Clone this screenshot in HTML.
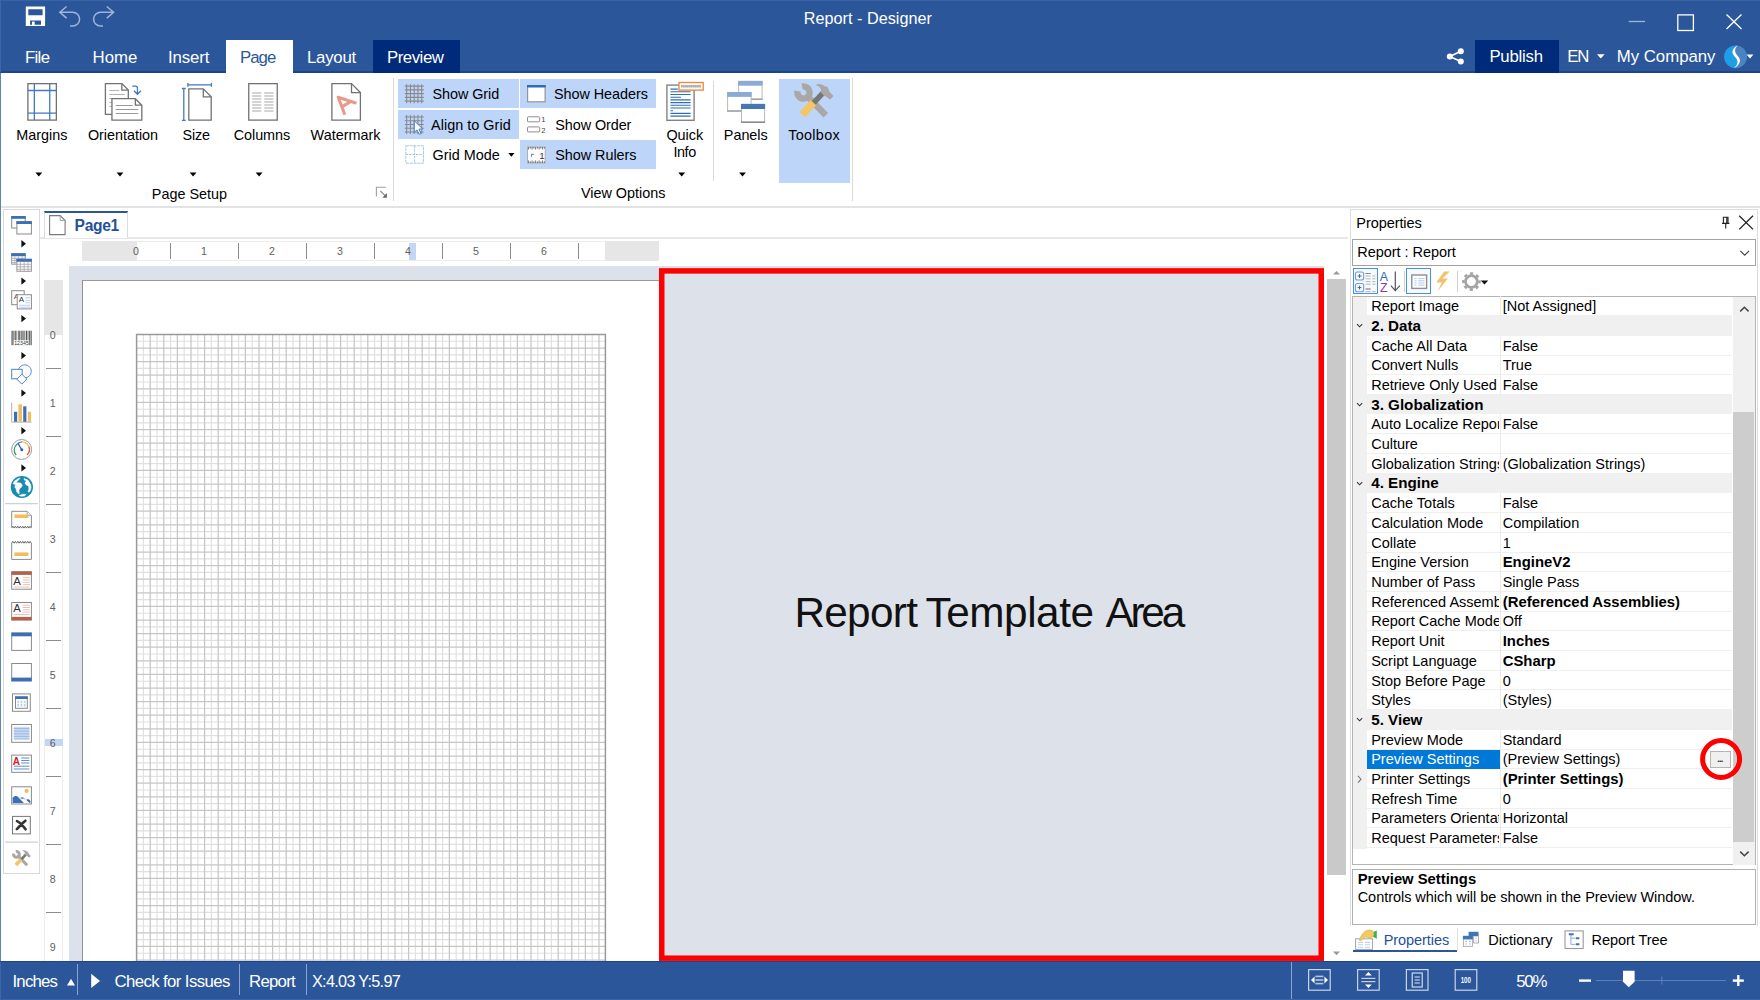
<!DOCTYPE html>
<html><head><meta charset="utf-8"><title>Report - Designer</title>
<style>
html,body{margin:0;padding:0}
body{width:1760px;height:1000px;position:relative;overflow:hidden;background:#fff;font-family:'Liberation Sans',sans-serif;color:#000}
div,svg{position:absolute;box-sizing:border-box}
div{line-height:40px;white-space:pre}
svg{overflow:visible}
svg text{font-family:'Liberation Sans',sans-serif}
</style></head><body>
<!-- p_title -->
<div style="left:0px;top:0px;width:1760px;height:72.6px;background:#2b579a;"></div>
<div style="left:0px;top:71px;width:1760px;height:1.6px;background:#1b4590;"></div>
<div style="left:0px;top:0px;width:1760px;height:1.1px;background:#3a63a5;"></div>
<div style="left:0px;top:0px;width:1.1px;height:72px;background:#3d66a7;"></div>
<svg style="left:20px;top:0px;" width="110" height="40" viewBox="0 0 110 40"><path d="M5.8 6.5h19.3v19.5h-19.3z M8.3 9.2v6.1h14.3v-6.1z M10.1 20.4v4.4h10.9v-4.4z" fill="#fff" fill-rule="evenodd"/><rect x="12" y="21.6" width="2.7" height="3.4" fill="#fff"/><g fill="none" stroke="#9fb4da" stroke-width="1.5"><path d="M46.6 6.5 L39.8 12.3 L46.6 18.1 M39.8 12.3 H52.6 A7 6.85 0 0 1 52.6 26 H50"/><path d="M86.8 6.5 L93.6 12.3 L86.8 18.1 M93.6 12.3 H80.6 A7 6.85 0 0 0 80.6 26 H83"/></g></svg>
<div style="left:803.8px;top:-2px;font-size:16.2px;letter-spacing:0.02px;color:#fff;">Report - Designer</div>
<svg style="left:1620px;top:8px;" width="130" height="28" viewBox="0 0 130 28"><g fill="none" stroke="#fff" stroke-width="1.3"><path d="M8.7 13.5H25" stroke="#9fb4da"/><rect x="57.8" y="6.9" width="15.6" height="15.6"/><path d="M106.5 6.5L121.5 21 M121.5 6.5L106.5 21"/></g></svg>
<div style="left:226.3px;top:40.2px;width:66.4px;height:33px;background:#fff;"></div>
<div style="left:372.6px;top:40.2px;width:87.6px;height:32.4px;background:#002a7a;"></div>
<div style="left:25px;top:38px;font-size:16.8px;letter-spacing:-0.68px;color:#fff;">File</div>
<div style="left:92.5px;top:38px;font-size:16.8px;letter-spacing:0.05px;color:#fff;">Home</div>
<div style="left:168px;top:38px;font-size:16.8px;letter-spacing:-0.1px;color:#fff;">Insert</div>
<div style="left:240px;top:38px;font-size:16.8px;letter-spacing:-0.98px;color:#2b579a;">Page</div>
<div style="left:307px;top:38px;font-size:16.8px;letter-spacing:-0.24px;color:#fff;">Layout</div>
<div style="left:387px;top:38px;font-size:16.8px;letter-spacing:-0.47px;color:#fff;">Preview</div>
<div style="left:1475.3px;top:40.2px;width:84.2px;height:32.4px;background:#002a7a;"></div>
<div style="left:1489.4px;top:37px;font-size:16.8px;letter-spacing:-0.22px;color:#fff;">Publish</div>
<div style="left:1567.3px;top:37px;font-size:16.8px;letter-spacing:-1.2px;color:#fff;">EN</div>
<div style="left:1616.8px;top:37px;font-size:16.8px;letter-spacing:-0.02px;color:#fff;">My Company</div>
<svg style="left:1440px;top:40px;" width="320" height="32" viewBox="0 0 320 32"><g fill="#fff"><circle cx="9.8" cy="16.5" r="3"/><circle cx="20.8" cy="11.2" r="3"/><circle cx="20.8" cy="21.6" r="3"/></g><path d="M20.8 11.2L9.8 16.5L20.8 21.6" fill="none" stroke="#fff" stroke-width="1.6"/><path d="M157 14.2h7.6l-3.8 4.2z" fill="#fff"/><circle cx="295.5" cy="16.8" r="11.4" fill="#1c9fe6"/><path d="M295.5 5.4A11.4 11.4 0 0 1 295.5 28.2C299 24 299.5 20 296 16.5C292.5 13 292.5 9 295.5 5.4z" fill="#4c82c4"/><path d="M297.5 5.6C291 9 291.5 13.5 295 17C298.5 20.5 298.5 24 294 28.1C299.5 25.5 302 20.5 298 16.3C294.5 12.6 294 9.5 297.5 5.6z" fill="#fff"/><path d="M306.6 14.6h6.8l-3.4 3.8z" fill="#fff"/></svg>
<!-- p_ribbon -->
<div style="left:0px;top:72.5px;width:1760px;height:134px;background:#fff;"></div>
<div style="left:0px;top:205.7px;width:1760px;height:2px;background:#e3e3e3;"></div>
<div style="left:398px;top:79.2px;width:121px;height:28.4px;background:#bdd5f9;"></div>
<div style="left:398px;top:109.9px;width:121px;height:28.9px;background:#bdd5f9;"></div>
<div style="left:520.2px;top:79.2px;width:136.2px;height:28.4px;background:#bdd5f9;"></div>
<div style="left:520.2px;top:140.2px;width:136.2px;height:29.2px;background:#bdd5f9;"></div>
<div style="left:779px;top:79.2px;width:71px;height:103.5px;background:#bdd5f9;"></div>
<div style="left:393.2px;top:77.6px;width:1px;height:123.4px;background:#dadada;"></div>
<div style="left:712.7px;top:81.3px;width:1px;height:99.4px;background:#dadada;"></div>
<div style="left:852px;top:77.6px;width:1px;height:123.4px;background:#dadada;"></div>
<div style="left:16.3px;top:115px;font-size:14.4px;">Margins</div>
<div style="left:87.9px;top:115px;font-size:14.4px;letter-spacing:-0.02px;">Orientation</div>
<div style="left:182.5px;top:115px;font-size:14.4px;letter-spacing:-0.17px;">Size</div>
<div style="left:233.8px;top:115px;font-size:14.4px;letter-spacing:-0.07px;">Columns</div>
<div style="left:310.6px;top:115px;font-size:14.4px;letter-spacing:0.01px;">Watermark</div>
<div style="left:151.8px;top:174px;font-size:14.4px;letter-spacing:0px;">Page Setup</div>
<div style="left:580.9px;top:173px;font-size:14.4px;">View Options</div>
<div style="left:432.6px;top:74px;font-size:14.4px;letter-spacing:-0.07px;">Show Grid</div>
<div style="left:431.1px;top:105px;font-size:14.4px;letter-spacing:0.03px;">Align to Grid</div>
<div style="left:432.6px;top:135px;font-size:14.4px;letter-spacing:0.01px;">Grid Mode</div>
<div style="left:553.9px;top:74px;font-size:14.4px;letter-spacing:-0.04px;">Show Headers</div>
<div style="left:555.3px;top:105px;font-size:14.4px;letter-spacing:-0.08px;">Show Order</div>
<div style="left:555.3px;top:135px;font-size:14.4px;letter-spacing:-0.04px;">Show Rulers</div>
<div style="left:666.4px;top:115px;font-size:14.4px;letter-spacing:0.01px;">Quick</div>
<div style="left:673.5px;top:132px;font-size:14.4px;letter-spacing:-0.45px;">Info</div>
<div style="left:723.8px;top:115px;font-size:14.4px;letter-spacing:-0.01px;">Panels</div>
<div style="left:788.2px;top:115px;font-size:14.4px;letter-spacing:0.32px;">Toolbox</div>
<svg style="left:0px;top:72px;" width="1760" height="135" viewBox="0 0 1760 135"><path d="M35.4 100.4h6.8l-3.4 4z" fill="#000"/><path d="M116.6 100.4h6.8l-3.4 4z" fill="#000"/><path d="M189.7 100.4h6.8l-3.4 4z" fill="#000"/><path d="M255.7 100.4h6.8l-3.4 4z" fill="#000"/><path d="M678.3 100.4h6.8l-3.4 4z" fill="#000"/><path d="M739.1 100.4h6.8l-3.4 4z" fill="#000"/><path d="M508.3 80.9h6.2l-3.1 3.8z" fill="#000"/><path d="M376.4 124.6 V115.3 H385.9" fill="none" stroke="#a0a0a0" stroke-width="1.1"/><path d="M380.4 119 L385 123.6" stroke="#8a8a8a" stroke-width="1.1"/><path d="M386.9 121 V125.8 H382.3z" fill="#666"/><g transform="translate(27.25 11)" fill="none"><path d="M7.1 0.7v36.4M22.5 0.7v36.4M0.7 7.5h28.4M0.7 30.2h28.4" stroke="#3f7ac2" stroke-width="1.3"/><rect x="0.65" y="0.65" width="28.45" height="36.45" stroke="#727272" stroke-width="1.3"/></g><g transform="translate(104.75 11)" fill="#fff" stroke="#727272" stroke-width="1.3"><path d="M0.65 0.65h16.5l6.4 6.4v24.4h-22.9z"/><path d="M17.1 0.65v6.4h6.4" fill="none"/><path d="M4.5 7.5h10M4.5 11.5h15.5M4.5 15.5h15.5M4.5 19.5h4M4.5 23.5h4" stroke="#b5b5b5" stroke-width="1"/><path d="M7.2 15.7h23.4l6.5 6.5v14.9h-29.9z"/><path d="M30.6 15.7v6.5h6.5" fill="none"/><path d="M11 22.5h17M11 26.5h22.5M11 30.5h22.5" stroke="#9a9a9a" stroke-width="1"/><path d="M27.5 3.2h3.2a2 2 0 0 1 2 2v5.5M29.2 7.8l3.5 3.5l3.5-3.5" fill="none" stroke="#3f7ac2" stroke-width="1.3"/></g><g transform="translate(181.9 11)" fill="none" stroke-width="1.3"><path d="M6.9 5.9h14.5l7.9 7.9v23.3h-22.4z" stroke="#727272" fill="#fff"/><path d="M21.4 5.9v7.9h7.9" stroke="#727272"/><path d="M6 1.8h23.5M6 0v3.8M29.5 0v3.8M1.9 5.5v31.8M0 5.5h3.8M0 37.3h3.8" stroke="#3f7ac2"/></g><g transform="translate(248.1 11)" fill="none"><rect x="0.65" y="0.65" width="28.5" height="36.45" stroke="#727272" stroke-width="1.3" fill="#fff"/><path d="M4 10h9.2M4 13h9.2M4 16h9.2M4 19h9.2M4 22h9.2M4 25h9.2M4 28h9.2M16.2 10h9.2M16.2 13h9.2M16.2 16h9.2M16.2 19h9.2M16.2 22h9.2M16.2 25h9.2M16.2 28h9.2" stroke="#a8a8a8" stroke-width="1.2"/></g><g transform="translate(331.25 11)" fill="none"><path d="M0.65 0.65h19.6l8.9 8.9v27.55h-28.5z" stroke="#727272" stroke-width="1.3" fill="#fff"/><path d="M20.25 0.65v8.9h8.9" stroke="#727272" stroke-width="1.3"/><path d="M13.6 31.8L6.9 14.2L25.2 20.2M11.4 23.4L18.6 19.2" stroke="#e8998d" stroke-width="3.1" stroke-linejoin="round"/></g><path d="M406.7 12.2v19M404.8 14.1h19M410.45 12.2v19M404.8 17.85h19M414.2 12.2v19M404.8 21.6h19M417.95 12.2v19M404.8 25.35h19M421.7 12.2v19M404.8 29.1h19" stroke="#8a8a8a" stroke-width="1.05" fill="none"/><path d="M406.7 43v19M404.8 44.9h19M410.45 43v19M404.8 48.65h19M414.2 43v19M404.8 52.4h19M417.95 43v19M404.8 56.15h19M421.7 43v19M404.8 59.9h19" stroke="#8a8a8a" stroke-width="1.05" fill="none"/><path d="M414.3 48.8 v11.6 l2.7-2.5 l2 4.4 l1.9-0.9 l-2-4.3 l3.7-0.2z" fill="#fff" stroke="#3b78c3" stroke-width="0.9" stroke-linejoin="round"/><g transform="translate(405.3 73.3)" fill="none" stroke="#a6c4ea" stroke-width="1"><rect x="0.5" y="0.5" width="17.6" height="17.4" stroke-dasharray="3 0.8"/><path d="M9.3 0.5v17.4M0.5 9.2h17.6" stroke-dasharray="2.4 1"/></g><g transform="translate(527 13)"><rect x="0.6" y="0.6" width="17.5" height="16.2" fill="#fff" stroke="#959595" stroke-width="1.2"/><rect x="0" y="0" width="18.7" height="2.5" fill="#2e6db5"/></g><g transform="translate(527 44.3)" fill="#fff" stroke="#8f8f8f" stroke-width="1"><rect x="0.5" y="0.5" width="12.2" height="5" rx="0.8"/><rect x="0.5" y="10.6" width="12.2" height="5" rx="0.8"/></g><text x="541.2" y="50.1" font-size="7.7" fill="#444">1</text><text x="541.2" y="60.5" font-size="7.7" fill="#444">2</text><g transform="translate(527 74.5)"><rect x="0.5" y="0.5" width="17.7" height="16" fill="#fff" stroke="#b0b0b0" stroke-width="1"/><path d="M1.6 0.5v2.6M3.35 0.5v1.6M5.1 0.5v2.6M6.85 0.5v1.6M8.6 0.5v2.6M10.35 0.5v1.6M12.1 0.5v2.6M13.85 0.5v1.6M15.6 0.5v2.6M17.35 0.5v1.6M1.6 16.5v-2.6M3.35 16.5v-1.6M5.1 16.5v-2.6M6.85 16.5v-1.6M8.6 16.5v-2.6M10.35 16.5v-1.6M12.1 16.5v-2.6M13.85 16.5v-1.6M15.6 16.5v-2.6M17.35 16.5v-1.6" stroke="#555" stroke-width="0.8" fill="none"/><path d="M4.4 7.8h2.4M4.4 7.8v2.4" stroke="#3b78c3" stroke-width="1" fill="none"/><text x="12.2" y="12" font-size="9.7" fill="#333">1</text></g><rect x="666.9" y="13.1" width="27.2" height="35.2" fill="#fff" stroke="#838383" stroke-width="1.4"/><path d="M670.4 17.1h7.4M670.4 19.8h20.2M670.4 22.5h20.2M670.4 25.2h10.5M670.4 27.9h20.2M670.4 30.6h20.2M670.4 33.3h20.2M670.4 36h20.2M670.4 38.7h2.6M670.4 41.4h20.2M670.4 44.1h20.2" stroke="#2f6db8" stroke-width="1.1" fill="none"/><rect x="679" y="10.5" width="24.2" height="7.6" fill="#fff" stroke="#f0883a" stroke-width="1.35"/><path d="M681.4 14.3h19.6" stroke="#777" stroke-width="2.6" stroke-dasharray="1.1 0.9"/><rect x="738.6" y="9.4" width="23.5" height="17.9" fill="#fff" stroke="#b9b9b9" stroke-width="1"/><rect x="738.1" y="26.5" width="24.5" height="1.3" fill="#9a9a9a"/><rect x="738.1" y="8.9" width="24.5" height="4.8" fill="#8aabd4"/><rect x="727.6" y="20.5" width="23.5" height="18.6" fill="#fff" stroke="#b9b9b9" stroke-width="1"/><rect x="727.1" y="38.3" width="24.5" height="1.3" fill="#9a9a9a"/><rect x="727.1" y="20" width="24.5" height="4.9" fill="#8aabd4"/><rect x="741.5" y="32.4" width="23.1" height="17.9" fill="#fff" stroke="#b9b9b9" stroke-width="1"/><rect x="741" y="49.5" width="24.1" height="1.3" fill="#7d7d7d"/><rect x="741" y="31.9" width="24.1" height="5.1" fill="#4477b5"/><g transform="translate(794.2 11.3) scale(1) translate(-14.2 -7.3)"><path d="M22.1 10.6A6.05 6.05 0 1 1 17.6 15.1" fill="none" stroke="#a9a8a6" stroke-width="6.3"/><path d="M27.3 20.3L45.8 39.3" stroke="#a9a8a6" stroke-width="6.4"/><path d="M42.8 17.2L33.2 27.4" stroke="#767676" stroke-width="5.4"/><path d="M33.4 26.6L22.2 38.8" stroke="#f5c666" stroke-width="7.6"/><path d="M35.5 8.9C38.5 7.4 42 8 44.8 10.2L47.6 11L49.4 15.6L53.5 20L50 23.7L46.2 20.4L43.6 19.6L40.9 16.2L41 13.2C39.8 11 38 9.6 35.5 8.9z" fill="#a9a8a6"/></g></svg>
<!-- p_tool -->
<div style="left:3.3px;top:209.3px;width:36.9px;height:665px;background:#fff;border:1px solid #d9d9d9;"></div>
<svg style="left:0px;top:205px;" width="44" height="680" viewBox="0 0 44 680"><path d="M21.4 35v7.4l4.6-3.7z" fill="#111"/><path d="M21.4 72.4v7.4l4.6-3.7z" fill="#111"/><path d="M21.4 109.9v7.4l4.6-3.7z" fill="#111"/><path d="M21.4 146.9v7.4l4.6-3.7z" fill="#111"/><path d="M21.4 184.4v7.4l4.6-3.7z" fill="#111"/><path d="M21.4 222v7.4l4.6-3.7z" fill="#111"/><path d="M21.4 259.2v7.4l4.6-3.7z" fill="#111"/><g transform="translate(11.2 11)"><rect x="0.5" y="0.5" width="13.5" height="11.5" fill="#fff" stroke="#8a8a8a" stroke-width="1"/><rect x="0" y="0" width="14.5" height="2.8" fill="#3b6fb6"/><rect x="5.7" y="5.7" width="14.5" height="12.3" fill="#fff" stroke="#8a8a8a" stroke-width="1"/><rect x="5.2" y="5.2" width="15.5" height="2.8" fill="#3b6fb6"/></g><g transform="translate(11.2 48.2)"><rect x="0.5" y="0.5" width="13.5" height="10.5" fill="#fff" stroke="#9a9a9a" stroke-width="1"/><rect x="0" y="0" width="14.5" height="3" fill="#3b6fb6"/><path d="M3.62 3v8.5M7.25 3v8.5M10.88 3v8.5M0 5.12h14.5M0 7.25h14.5M0 9.38h14.5" stroke="#a5a5a5" stroke-width="0.8" fill="none"/><rect x="5.7" y="6.1" width="14.5" height="12" fill="#fff" stroke="#9a9a9a" stroke-width="1"/><rect x="5.2" y="5.6" width="15.5" height="3" fill="#3b6fb6"/><path d="M9.07 8.6v10M12.95 8.6v10M16.82 8.6v10M5.2 11.1h15.5M5.2 13.6h15.5M5.2 16.1h15.5" stroke="#a5a5a5" stroke-width="0.8" fill="none"/></g><g transform="translate(11.2 85.2)"><rect x="0.5" y="0.5" width="12.5" height="14" fill="#fff" stroke="#8a8a8a" stroke-width="1"/><text x="2.6" y="8.5" font-size="8" fill="#555">A</text><rect x="6" y="4.5" width="14.2" height="14.2" fill="#fff" stroke="#8a8a8a" stroke-width="1"/><text x="7.6" y="12.3" font-size="8" fill="#333">A</text><path d="M14 7.5h5M14 10h5M14 12.5h5M8 15h11M8 17h11" stroke="#b9cfee" stroke-width="1.1"/></g><g transform="translate(11.2 125.7)"><rect x="0.3" y="0" width="1.2" height="14.5" fill="#555"/><rect x="2.2" y="0" width="0.7" height="14.5" fill="#555"/><rect x="3.4" y="0" width="1.2" height="14.5" fill="#555"/><rect x="5.3" y="0" width="0.7" height="14.5" fill="#555"/><rect x="6.8" y="0" width="0.7" height="14.5" fill="#555"/><rect x="8" y="0" width="1.2" height="14.5" fill="#555"/><rect x="10" y="0" width="0.7" height="14.5" fill="#555"/><rect x="11.2" y="0" width="1.2" height="14.5" fill="#555"/><rect x="13.2" y="0" width="0.7" height="14.5" fill="#555"/><rect x="14.6" y="0" width="1.2" height="14.5" fill="#555"/><rect x="16.4" y="0" width="0.7" height="14.5" fill="#555"/><rect x="17.6" y="0" width="1.1" height="14.5" fill="#555"/><rect x="19.3" y="0" width="1.2" height="14.5" fill="#555"/><rect x="2.6" y="9.6" width="15.4" height="5" fill="#fff"/><text x="3" y="14.3" font-size="5" fill="#333" textLength="14.6" lengthAdjust="spacingAndGlyphs">12345</text></g><g transform="translate(11.2 159.3)"><circle cx="13.6" cy="7" r="6.5" fill="#fff" stroke="#5a8fd0" stroke-width="1"/><rect x="0.5" y="5" width="10.5" height="9.5" fill="#fff" stroke="#4a84c8" stroke-width="1"/><path d="M10.6 9.8l5 5l-5 5l-5-5z" fill="#fff" stroke="#4a84c8" stroke-width="1"/></g><g transform="translate(11.2 197.5)"><path d="M0.5 0v19.6h20" fill="none" stroke="#b0b0b0" stroke-width="1"/><rect x="2.8" y="9.3" width="3.2" height="10" fill="#3b6fb6"/><rect x="7.2" y="1.8" width="3.6" height="17.5" fill="#f2bd5c"/><rect x="12" y="3.8" width="3.2" height="15.5" fill="#3b6fb6"/><rect x="16.6" y="9.3" width="3.2" height="10" fill="#f2bd5c"/></g><g transform="translate(11.2 234)"><circle cx="10.4" cy="10.5" r="10" fill="#fff" stroke="#9a9a9a" stroke-width="1"/><path d="M4.9 16A7.6 7.6 0 0 1 6 5" fill="none" stroke="#3f9a6a" stroke-width="1.3"/><path d="M6 5A7.6 7.6 0 0 1 10.8 2.9" fill="none" stroke="#4a84c8" stroke-width="1.3"/><path d="M10.8 2.9A7.6 7.6 0 0 1 17.6 7.6" fill="none" stroke="#f2bd5c" stroke-width="1.3"/><path d="M17.6 7.6A7.6 7.6 0 0 1 15.9 16" fill="none" stroke="#e2553a" stroke-width="1.3"/><path d="M6.8 4.4l3.6 6.1" stroke="#2f62aa" stroke-width="1.3"/><circle cx="10.6" cy="10.8" r="1.5" fill="#2f62aa"/></g><g transform="translate(4 267)"><circle cx="17.87" cy="15" r="11.1" fill="#178bb0"/><g fill="#fff" stroke="#fff" stroke-width="0.5" stroke-linejoin="round"><path d="M9 11.7L10.5 9L14.4 6.5L16.2 6.2L12 10.5L16.8 11.1L18.3 13.2L17.7 15L15.9 16.2L15 18.6L15.3 21.6L14.1 21.6L12.6 19.5L12 16.8L10.8 15.3L11.4 12.6z"/><path d="M20.1 6.5L24 8.1L26.4 12L27.2 15L26.4 18.6L25.2 20.1L24 20L24.9 16.8L24.6 14.1L22.2 12.9L20.9 11.1L22.2 9L20.1 7.8z"/><path d="M15 23.4L18.6 22.2L22.2 22.4L20.4 24L17.4 24.3z"/></g></g><path d="M5 298.7h33.1" stroke="#d0d0d0" stroke-width="1.3"/><g transform="translate(11.2 305.8)"><path d="M0.5 16.5V0.5h15.4l4.3 4.3V16.5" fill="#fff" stroke="#8a8a8a" stroke-width="1"/><path d="M15.9 0.5v4.3h4.3" fill="#dfe8f6" stroke="#9a9a9a" stroke-width="0.8"/><path d="M0.5 17.3l1.23 -1.9l1.23 1.9l1.23 -1.9l1.23 1.9l1.23 -1.9l1.23 1.9l1.23 -1.9l1.23 1.9l1.23 -1.9l1.23 1.9l1.23 -1.9l1.23 1.9l1.23 -1.9l1.23 1.9l1.23 -1.9l1.23 1.9" fill="none" stroke="#6a6a6a" stroke-width="1"/><rect x="3.2" y="3.6" width="14" height="3.6" fill="#f2bd5c"/></g><g transform="translate(11.2 336.6)"><path d="M0.5 1.5V17.8h19.7V1.5" fill="#fff" stroke="#8a8a8a" stroke-width="1"/><path d="M0.5 1.6l1.23 -1.9l1.23 1.9l1.23 -1.9l1.23 1.9l1.23 -1.9l1.23 1.9l1.23 -1.9l1.23 1.9l1.23 -1.9l1.23 1.9l1.23 -1.9l1.23 1.9l1.23 -1.9l1.23 1.9l1.23 -1.9l1.23 1.9" fill="none" stroke="#6a6a6a" stroke-width="1"/><rect x="3.2" y="10.8" width="14" height="3.6" fill="#f2bd5c"/></g><g transform="translate(11.2 366.2)"><rect x="0.5" y="0.5" width="19.7" height="17.5" fill="#fff" stroke="#8a8a8a" stroke-width="1"/><rect x="0.3" y="0.3" width="20.1" height="3.4" fill="#b5604a"/><text x="2" y="13.4" font-size="11.4" fill="#333">A</text><path d="M11.6 6.5h7M11.6 8.8h7M11.6 11.1h7M11.6 13.4h7" stroke="#e6b8ad" stroke-width="0.9"/><path d="M2.6 15.8h15.8" stroke="#e6b8ad" stroke-width="0.9"/></g><g transform="translate(11.2 397)"><rect x="0.5" y="0.5" width="19.7" height="17.5" fill="#fff" stroke="#8a8a8a" stroke-width="1"/><rect x="0.3" y="14.9" width="20.1" height="3.4" fill="#b5604a"/><text x="2" y="10.1" font-size="11.4" fill="#333">A</text><path d="M11.6 3.2h7M11.6 5.5h7M11.6 7.8h7M11.6 10.1h7" stroke="#e6b8ad" stroke-width="0.9"/><path d="M2.6 12.6h15.8" stroke="#e6b8ad" stroke-width="0.9"/></g><g transform="translate(11.2 427.4)"><rect x="0.5" y="0.5" width="19.7" height="17.5" fill="#fff" stroke="#8a8a8a" stroke-width="1"/><rect x="0.3" y="0.3" width="20.1" height="3.6" fill="#3b6fb6"/></g><g transform="translate(11.2 458)"><rect x="0.5" y="0.5" width="19.7" height="17.5" fill="#fff" stroke="#8a8a8a" stroke-width="1"/><rect x="0.3" y="14.6" width="20.1" height="3.6" fill="#3b6fb6"/></g><g transform="translate(12 488.4)"><rect x="0.5" y="0.5" width="17.8" height="17.4" fill="#fff" stroke="#8a8a8a" stroke-width="1"/><rect x="3.5" y="3.5" width="11.8" height="11.4" fill="#fff" stroke="#8a8a8a" stroke-width="1"/><rect x="3" y="3" width="12.8" height="2.6" fill="#3b6fb6"/><path d="M6.2 7.4v6M9.4 7.4v6M12.6 7.4v6" stroke="#b9cfee" stroke-width="1.6" stroke-dasharray="2.4 0.8"/></g><g transform="translate(11.2 519)"><rect x="0.5" y="0.5" width="19.7" height="17.8" fill="#fff" stroke="#8a8a8a" stroke-width="1"/><rect x="2.6" y="2.8" width="15.6" height="12.6" fill="#c9daf2"/><path d="M2.6 4.6h15.6M2.6 7.2h15.6M2.6 9.8h15.6M2.6 12.4h15.6M2.6 15h15.6" stroke="#8fb0dc" stroke-width="0.8"/></g><g transform="translate(11.2 549.6)"><rect x="0.5" y="0.5" width="19.7" height="17.2" fill="#fff" stroke="#8a8a8a" stroke-width="1"/><text x="1.6" y="10.6" font-size="10" font-weight="bold" fill="#d8202a">A</text><path d="M10 3.4h8.2M10 5.9h8.2M10 8.4h8.2M2.6 11.6h15.6M2.6 14.4h15.6" stroke="#5b8fd0" stroke-width="1"/></g><g transform="translate(11.2 581.3)"><rect x="0.5" y="0.5" width="19.7" height="17.2" fill="#fff" stroke="#8a8a8a" stroke-width="1"/><circle cx="15.4" cy="4.6" r="2.1" fill="#f2bd5c"/><path d="M1.4 16.8V11.6C3 9.4 5.4 9 7.4 10.8L13 16.8z" fill="#3b6fb6"/><path d="M8.6 12C10.4 10.6 12.2 10.8 13.6 12.2L17.8 16.4L19.2 16.8V14.6C18.2 13 16.8 12.6 15.4 13.4" fill="#3b6fb6"/><path d="M7 10.4l6.4 6.4M11.6 11l5.6 5.6" stroke="#fff" stroke-width="0.9"/></g><g transform="translate(12 610.9)"><rect x="0.5" y="0.5" width="17.8" height="17.5" fill="#fff" stroke="#777" stroke-width="1"/><path d="M5 5.2C8 6.6 10.6 9.4 13.6 13.4M13.4 4.8C10.6 7 7.4 10.6 4.8 13.2" stroke="#333" stroke-width="2.6" fill="none" stroke-linecap="round"/></g><path d="M5 637.1h33.1" stroke="#d0d0d0" stroke-width="1.3"/><g transform="translate(12 644.9) scale(0.48) translate(-14.2 -7.3)"><path d="M22.1 10.6A6.05 6.05 0 1 1 17.6 15.1" fill="none" stroke="#a9a8a6" stroke-width="6.3"/><path d="M27.3 20.3L45.8 39.3" stroke="#a9a8a6" stroke-width="6.4"/><path d="M42.8 17.2L33.2 27.4" stroke="#767676" stroke-width="5.4"/><path d="M33.4 26.6L22.2 38.8" stroke="#f5c666" stroke-width="7.6"/><path d="M35.5 8.9C38.5 7.4 42 8 44.8 10.2L47.6 11L49.4 15.6L53.5 20L50 23.7L46.2 20.4L43.6 19.6L40.9 16.2L41 13.2C39.8 11 38 9.6 35.5 8.9z" fill="#a9a8a6"/></g></svg>
<!-- p_design -->
<div style="left:0px;top:72.5px;width:1.1px;height:888.5px;background:#6082ba;"></div>
<div style="left:40px;top:237.3px;width:1308px;height:1.8px;background:#e7e7e7;"></div>
<div style="left:43.5px;top:211px;width:84px;height:27px;background:#fff;border-left:1px solid #dcdcdc;border-right:1px solid #dcdcdc;border-top:2.2px solid #2b579a;"></div>
<svg style="left:48.6px;top:214.7px;" width="17" height="21" viewBox="0 0 17 21"><path d="M0.6 0.6h10.6l4.9 4.9v14.1h-15.5z" fill="#fff" stroke="#7a7a7a" stroke-width="1.1"/><path d="M11.2 0.6v4.9h4.9" fill="none" stroke="#9a9a9a" stroke-width="0.9"/></svg>
<div style="left:74.6px;top:206px;font-size:15.6px;letter-spacing:-0.31px;font-weight:bold;color:#24509a;">Page1</div>
<div style="left:82px;top:241.4px;width:577px;height:19.2px;background:#fff;border-top:1px solid #ededed;border-bottom:1px solid #ededed;"></div>
<div style="left:82px;top:241.4px;width:54.7px;height:19.2px;background:#e6e6e6;"></div>
<div style="left:605px;top:241.4px;width:54px;height:19.2px;background:#e6e6e6;"></div>
<div style="left:408.6px;top:243.2px;width:7px;height:17px;background:#c3d6f6;"></div>
<div style="left:133.06px;top:231px;font-size:10.6px;color:#606060;">0</div>
<div style="left:170.3px;top:243.4px;width:1.1px;height:15.3px;background:#8c8c8c;"></div>
<div style="left:201.06px;top:231px;font-size:10.6px;color:#606060;">1</div>
<div style="left:238.3px;top:243.4px;width:1.1px;height:15.3px;background:#8c8c8c;"></div>
<div style="left:269.06px;top:231px;font-size:10.6px;color:#606060;">2</div>
<div style="left:306.3px;top:243.4px;width:1.1px;height:15.3px;background:#8c8c8c;"></div>
<div style="left:337.06px;top:231px;font-size:10.6px;color:#606060;">3</div>
<div style="left:374.3px;top:243.4px;width:1.1px;height:15.3px;background:#8c8c8c;"></div>
<div style="left:405.06px;top:231px;font-size:10.6px;color:#606060;">4</div>
<div style="left:442.3px;top:243.4px;width:1.1px;height:15.3px;background:#8c8c8c;"></div>
<div style="left:473.06px;top:231px;font-size:10.6px;color:#606060;">5</div>
<div style="left:510.3px;top:243.4px;width:1.1px;height:15.3px;background:#8c8c8c;"></div>
<div style="left:541.06px;top:231px;font-size:10.6px;color:#606060;">6</div>
<div style="left:578.3px;top:243.4px;width:1.1px;height:15.3px;background:#8c8c8c;"></div>
<div style="left:44px;top:280px;width:19.4px;height:681px;background:#fff;border-left:1px solid #ededed;border-right:1px solid #ededed;"></div>
<div style="left:44px;top:280px;width:19.4px;height:54.5px;background:#e6e6e6;"></div>
<div style="left:44.8px;top:739.2px;width:17.8px;height:6.8px;background:#c3d6f6;"></div>
<div style="left:49.66px;top:315px;font-size:10.6px;color:#606060;">0</div>
<div style="left:45.6px;top:367.8px;width:15.4px;height:1.1px;background:#8c8c8c;"></div>
<div style="left:49.66px;top:383px;font-size:10.6px;color:#606060;">1</div>
<div style="left:45.6px;top:435.8px;width:15.4px;height:1.1px;background:#8c8c8c;"></div>
<div style="left:49.66px;top:451px;font-size:10.6px;color:#606060;">2</div>
<div style="left:45.6px;top:503.8px;width:15.4px;height:1.1px;background:#8c8c8c;"></div>
<div style="left:49.66px;top:519px;font-size:10.6px;color:#606060;">3</div>
<div style="left:45.6px;top:571.8px;width:15.4px;height:1.1px;background:#8c8c8c;"></div>
<div style="left:49.66px;top:587px;font-size:10.6px;color:#606060;">4</div>
<div style="left:45.6px;top:639.8px;width:15.4px;height:1.1px;background:#8c8c8c;"></div>
<div style="left:49.66px;top:655px;font-size:10.6px;color:#606060;">5</div>
<div style="left:45.6px;top:707.8px;width:15.4px;height:1.1px;background:#8c8c8c;"></div>
<div style="left:49.66px;top:723px;font-size:10.6px;color:#606060;">6</div>
<div style="left:45.6px;top:775.8px;width:15.4px;height:1.1px;background:#8c8c8c;"></div>
<div style="left:49.66px;top:791px;font-size:10.6px;color:#606060;">7</div>
<div style="left:45.6px;top:843.8px;width:15.4px;height:1.1px;background:#8c8c8c;"></div>
<div style="left:49.66px;top:859px;font-size:10.6px;color:#606060;">8</div>
<div style="left:45.6px;top:911.8px;width:15.4px;height:1.1px;background:#8c8c8c;"></div>
<div style="left:49.66px;top:927px;font-size:10.6px;color:#606060;">9</div>
<div style="left:45.6px;top:979.8px;width:15.4px;height:1.1px;background:#8c8c8c;"></div>
<div style="left:68.7px;top:266.4px;width:1255.3px;height:694.6px;background:#dde2ea;"></div>
<div style="left:82.3px;top:279.6px;width:1200px;height:682px;background:#fff;border-left:1.2px solid #8f8f8f;border-top:1.6px solid #9a9a9a;"></div>
<svg style="left:0px;top:0px;" width="700" height="970" viewBox="0 0 700 970"><path d="M143.4 334.4V966M157 334.4V966M170.6 334.4V966M184.2 334.4V966M197.8 334.4V966M211.4 334.4V966M225 334.4V966M238.6 334.4V966M252.2 334.4V966M265.8 334.4V966M279.4 334.4V966M293 334.4V966M306.6 334.4V966M320.2 334.4V966M333.8 334.4V966M347.4 334.4V966M361 334.4V966M374.6 334.4V966M388.2 334.4V966M401.8 334.4V966M415.4 334.4V966M429 334.4V966M442.6 334.4V966M456.2 334.4V966M469.8 334.4V966M483.4 334.4V966M497 334.4V966M510.6 334.4V966M524.2 334.4V966M537.8 334.4V966M551.4 334.4V966M565 334.4V966M578.6 334.4V966M592.2 334.4V966M136.6 341.2H605.4M136.6 354.8H605.4M136.6 368.4H605.4M136.6 382H605.4M136.6 395.6H605.4M136.6 409.2H605.4M136.6 422.8H605.4M136.6 436.4H605.4M136.6 450H605.4M136.6 463.6H605.4M136.6 477.2H605.4M136.6 490.8H605.4M136.6 504.4H605.4M136.6 518H605.4M136.6 531.6H605.4M136.6 545.2H605.4M136.6 558.8H605.4M136.6 572.4H605.4M136.6 586H605.4M136.6 599.6H605.4M136.6 613.2H605.4M136.6 626.8H605.4M136.6 640.4H605.4M136.6 654H605.4M136.6 667.6H605.4M136.6 681.2H605.4M136.6 694.8H605.4M136.6 708.4H605.4M136.6 722H605.4M136.6 735.6H605.4M136.6 749.2H605.4M136.6 762.8H605.4M136.6 776.4H605.4M136.6 790H605.4M136.6 803.6H605.4M136.6 817.2H605.4M136.6 830.8H605.4M136.6 844.4H605.4M136.6 858H605.4M136.6 871.6H605.4M136.6 885.2H605.4M136.6 898.8H605.4M136.6 912.4H605.4M136.6 926H605.4M136.6 939.6H605.4M136.6 953.2H605.4" stroke="#e0e0e0" stroke-width="1.15" fill="none"/><path d="M150.2 334.4V966M163.8 334.4V966M177.4 334.4V966M191 334.4V966M204.6 334.4V966M218.2 334.4V966M231.8 334.4V966M245.4 334.4V966M259 334.4V966M272.6 334.4V966M286.2 334.4V966M299.8 334.4V966M313.4 334.4V966M327 334.4V966M340.6 334.4V966M354.2 334.4V966M367.8 334.4V966M381.4 334.4V966M395 334.4V966M408.6 334.4V966M422.2 334.4V966M435.8 334.4V966M449.4 334.4V966M463 334.4V966M476.6 334.4V966M490.2 334.4V966M503.8 334.4V966M517.4 334.4V966M531 334.4V966M544.6 334.4V966M558.2 334.4V966M571.8 334.4V966M585.4 334.4V966M599 334.4V966M136.6 348H605.4M136.6 361.6H605.4M136.6 375.2H605.4M136.6 388.8H605.4M136.6 402.4H605.4M136.6 416H605.4M136.6 429.6H605.4M136.6 443.2H605.4M136.6 456.8H605.4M136.6 470.4H605.4M136.6 484H605.4M136.6 497.6H605.4M136.6 511.2H605.4M136.6 524.8H605.4M136.6 538.4H605.4M136.6 552H605.4M136.6 565.6H605.4M136.6 579.2H605.4M136.6 592.8H605.4M136.6 606.4H605.4M136.6 620H605.4M136.6 633.6H605.4M136.6 647.2H605.4M136.6 660.8H605.4M136.6 674.4H605.4M136.6 688H605.4M136.6 701.6H605.4M136.6 715.2H605.4M136.6 728.8H605.4M136.6 742.4H605.4M136.6 756H605.4M136.6 769.6H605.4M136.6 783.2H605.4M136.6 796.8H605.4M136.6 810.4H605.4M136.6 824H605.4M136.6 837.6H605.4M136.6 851.2H605.4M136.6 864.8H605.4M136.6 878.4H605.4M136.6 892H605.4M136.6 905.6H605.4M136.6 919.2H605.4M136.6 932.8H605.4M136.6 946.4H605.4M136.6 960H605.4" stroke="#c6c6c6" stroke-width="1.25" fill="none"/><path d="M136.6 966V334.4H605.4V966" stroke="#999" stroke-width="1.5" fill="none"/></svg>
<div style="left:1327px;top:279.3px;width:18.8px;height:596px;background:#c9c9c9;"></div>
<svg style="left:1327px;top:266px;" width="19" height="695" viewBox="0 0 19 695"><path d="M6 8.6h7l-3.5-3.6z M6 685.6h7l-3.5 3.6z" fill="#9a9a9a"/></svg>
<svg style="left:650px;top:260px;" width="690" height="710" viewBox="0 0 690 710"><rect x="11.75" y="10.9" width="659.5" height="687.3" fill="#dde2ea" stroke="#ff0000" stroke-width="5.5"/></svg>
<div style="left:794.4px;top:593px;font-size:42.3px;color:#111;"><span style="letter-spacing:-0.67px;word-spacing:-2.95px">Report </span><span style="letter-spacing:-0.44px;word-spacing:0.65px">Template </span><span style="letter-spacing:-3.24px">Area</span></div>
<!-- p_props -->
<div style="left:1350px;top:209.3px;width:407.5px;height:717px;background:#fff;border:1px solid #dcdcdc;border-bottom:none;"></div>
<div style="left:1356.3px;top:203px;font-size:14.5px;letter-spacing:-0.07px;">Properties</div>
<svg style="left:1715px;top:212px;" width="42" height="20" viewBox="0 0 42 20"><path d="M8.4 5.2h4.6v6h-4.6z M7 11.4h7.4 M10.7 11.4v5" fill="none" stroke="#222" stroke-width="1.1"/><path d="M11.9 5.2v6" stroke="#222" stroke-width="1.4"/><path d="M24.2 3.8L38 17.4M38 3.8L24.2 17.4" stroke="#222" stroke-width="1.3"/></svg>
<div style="left:1352px;top:238.6px;width:404px;height:27.6px;background:#fff;border:1px solid #a2a2a2;"></div>
<div style="left:1357.3px;top:232px;font-size:14.5px;letter-spacing:-0.05px;">Report : Report</div>
<svg style="left:1738px;top:248px;" width="14" height="10" viewBox="0 0 14 10"><path d="M2.3 2.8l4.4 4.4l4.4-4.4" fill="none" stroke="#444" stroke-width="1.1"/></svg>
<div style="left:1353.1px;top:268.1px;width:24.7px;height:25.9px;background:#f6faff;border:1.1px solid #4a90e2;"></div>
<div style="left:1406.2px;top:268.1px;width:24.5px;height:25.9px;background:#f6faff;border:1.1px solid #4a90e2;"></div>
<div style="left:1403.8px;top:271px;width:1px;height:20.5px;background:#d0d0d0;"></div>
<div style="left:1457px;top:271px;width:1px;height:20.5px;background:#d0d0d0;"></div>
<svg style="left:1353px;top:266.5px;" width="140" height="30" viewBox="0 0 140 30"><g fill="#f3f8fe" stroke="#6f9fd8" stroke-width="1.1"><rect x="2.4" y="5" width="8.3" height="8" rx="2"/><rect x="2.4" y="16.5" width="8.3" height="8.2" rx="2"/><path d="M4.6 9h3.9M6.55 7.1v3.8M4.6 20.6h3.9M6.55 18.7v3.8" stroke="#555" stroke-width="0.9"/></g><path d="M12.6 6.5h5M12.6 9h5M12.6 11.8h5M12.6 14.6h5M12.6 17.2h5M12.6 22h5M12.6 24.6h5M19.3 9h3.2M19.3 11.8h3.2M19.3 14.6h3.2M19.3 17.2h3.2M19.3 24.6h3.2" stroke="#b5b5b5" stroke-width="1" fill="none"/><path d="M12.6 6.5h5M12.6 22h5" stroke="#8a8a8a" stroke-width="1.1" fill="none"/><text x="26.8" y="13.8" font-size="12.4" fill="#2e6db5">A</text><text x="27" y="24.9" font-size="12.4" fill="#8a3bb0">Z</text><path d="M42.3 4.5v19M37.9 18.6l4.4 5l4.6-5" fill="none" stroke="#555" stroke-width="1.2"/><rect x="58.8" y="8" width="14.8" height="13.4" fill="#fff" stroke="#8e8e8e" stroke-width="1.4"/><path d="M61.4 11.6h2.2M65.2 11.6h6.4M61.4 13.8h2.2M65.2 13.8h6.4M61.4 16h2.2M65.2 16h6.4M61.4 18.2h2.2M65.2 18.2h6.4" stroke="#a9c4e8" stroke-width="0.9"/><path d="M91.2 4.5L83.2 15.4h5.6L84.6 24.3L95 11.6h-5.6L96.8 4.5z" fill="#f0c36a"/><g transform="translate(118.4 14.6)"><circle r="5.9" fill="none" stroke="#a4a4a4" stroke-width="2.8"/><circle r="8.1" fill="none" stroke="#a4a4a4" stroke-width="2.4" stroke-dasharray="3.2 3.16" stroke-dashoffset="1.6"/></g><path d="M127.7 13.4h7.5l-3.75 4.1z" fill="#111"/></svg>
<div style="left:1352px;top:295.7px;width:404px;height:569.6px;background:#fff;border:1px solid #b4b4b4;"></div>
<div style="left:1353px;top:296.7px;width:14.2px;height:552px;background:#f0f0f0;"></div>
<div style="left:1366.4px;top:315.1px;width:365.6px;height:1px;background:#efefef;"></div>
<div style="left:1368px;top:296px;width:131.4px;height:19px;overflow:hidden;"><div style="left:3.2px;top:-10px;font-size:14.5px;">Report Image</div></div>
<div style="left:1502.7px;top:286px;font-size:14.5px;">[Not Assigned]</div>
<div style="left:1499.6px;top:296.2px;width:1px;height:19.7px;background:#ebebeb;"></div>
<div style="left:1353px;top:315.9px;width:379px;height:19.7px;background:#f0f0f0;"></div>
<div style="left:1371.2px;top:306px;font-size:15.2px;font-weight:bold;">2. Data</div>
<svg style="left:1355px;top:320.9px;" width="10" height="10" viewBox="0 0 10 10"><path d="M2 3.2l2.6 2.6l2.6-2.6" fill="none" stroke="#333" stroke-width="1.1"/></svg>
<div style="left:1366.4px;top:354.5px;width:365.6px;height:1px;background:#efefef;"></div>
<div style="left:1368px;top:336px;width:131.4px;height:19px;overflow:hidden;"><div style="left:3.2px;top:-10px;font-size:14.5px;">Cache All Data</div></div>
<div style="left:1502.7px;top:326px;font-size:14.5px;">False</div>
<div style="left:1499.6px;top:335.6px;width:1px;height:19.7px;background:#ebebeb;"></div>
<div style="left:1366.4px;top:374.2px;width:365.6px;height:1px;background:#efefef;"></div>
<div style="left:1368px;top:355px;width:131.4px;height:19px;overflow:hidden;"><div style="left:3.2px;top:-10px;font-size:14.5px;">Convert Nulls</div></div>
<div style="left:1502.7px;top:345px;font-size:14.5px;">True</div>
<div style="left:1499.6px;top:355.3px;width:1px;height:19.7px;background:#ebebeb;"></div>
<div style="left:1366.4px;top:393.9px;width:365.6px;height:1px;background:#efefef;"></div>
<div style="left:1368px;top:375px;width:131.4px;height:19px;overflow:hidden;"><div style="left:3.2px;top:-10px;font-size:14.5px;">Retrieve Only Used</div></div>
<div style="left:1502.7px;top:365px;font-size:14.5px;">False</div>
<div style="left:1499.6px;top:375px;width:1px;height:19.7px;background:#ebebeb;"></div>
<div style="left:1353px;top:394.7px;width:379px;height:19.7px;background:#f0f0f0;"></div>
<div style="left:1371.2px;top:385px;font-size:15.2px;font-weight:bold;">3. Globalization</div>
<svg style="left:1355px;top:399.7px;" width="10" height="10" viewBox="0 0 10 10"><path d="M2 3.2l2.6 2.6l2.6-2.6" fill="none" stroke="#333" stroke-width="1.1"/></svg>
<div style="left:1366.4px;top:433.3px;width:365.6px;height:1px;background:#efefef;"></div>
<div style="left:1368px;top:414px;width:131.4px;height:19px;overflow:hidden;"><div style="left:3.2px;top:-10px;font-size:14.5px;">Auto Localize Report</div></div>
<div style="left:1502.7px;top:404px;font-size:14.5px;">False</div>
<div style="left:1499.6px;top:414.4px;width:1px;height:19.7px;background:#ebebeb;"></div>
<div style="left:1366.4px;top:453px;width:365.6px;height:1px;background:#efefef;"></div>
<div style="left:1368px;top:434px;width:131.4px;height:19px;overflow:hidden;"><div style="left:3.2px;top:-10px;font-size:14.5px;">Culture</div></div>
<div style="left:1499.6px;top:434.1px;width:1px;height:19.7px;background:#ebebeb;"></div>
<div style="left:1366.4px;top:472.7px;width:365.6px;height:1px;background:#efefef;"></div>
<div style="left:1368px;top:454px;width:131.4px;height:19px;overflow:hidden;"><div style="left:3.2px;top:-10px;font-size:14.5px;">Globalization Strings</div></div>
<div style="left:1502.7px;top:444px;font-size:14.5px;">(Globalization Strings)</div>
<div style="left:1499.6px;top:453.8px;width:1px;height:19.7px;background:#ebebeb;"></div>
<div style="left:1353px;top:473.5px;width:379px;height:19.7px;background:#f0f0f0;"></div>
<div style="left:1371.2px;top:463px;font-size:15.2px;font-weight:bold;">4. Engine</div>
<svg style="left:1355px;top:478.5px;" width="10" height="10" viewBox="0 0 10 10"><path d="M2 3.2l2.6 2.6l2.6-2.6" fill="none" stroke="#333" stroke-width="1.1"/></svg>
<div style="left:1366.4px;top:512.1px;width:365.6px;height:1px;background:#efefef;"></div>
<div style="left:1368px;top:493px;width:131.4px;height:19px;overflow:hidden;"><div style="left:3.2px;top:-10px;font-size:14.5px;">Cache Totals</div></div>
<div style="left:1502.7px;top:483px;font-size:14.5px;">False</div>
<div style="left:1499.6px;top:493.2px;width:1px;height:19.7px;background:#ebebeb;"></div>
<div style="left:1366.4px;top:531.8px;width:365.6px;height:1px;background:#efefef;"></div>
<div style="left:1368px;top:513px;width:131.4px;height:19px;overflow:hidden;"><div style="left:3.2px;top:-10px;font-size:14.5px;">Calculation Mode</div></div>
<div style="left:1502.7px;top:503px;font-size:14.5px;">Compilation</div>
<div style="left:1499.6px;top:512.9px;width:1px;height:19.7px;background:#ebebeb;"></div>
<div style="left:1366.4px;top:551.5px;width:365.6px;height:1px;background:#efefef;"></div>
<div style="left:1368px;top:533px;width:131.4px;height:19px;overflow:hidden;"><div style="left:3.2px;top:-10px;font-size:14.5px;">Collate</div></div>
<div style="left:1502.7px;top:523px;font-size:14.5px;">1</div>
<div style="left:1499.6px;top:532.6px;width:1px;height:19.7px;background:#ebebeb;"></div>
<div style="left:1366.4px;top:571.2px;width:365.6px;height:1px;background:#efefef;"></div>
<div style="left:1368px;top:552px;width:131.4px;height:19px;overflow:hidden;"><div style="left:3.2px;top:-10px;font-size:14.5px;">Engine Version</div></div>
<div style="left:1502.7px;top:542px;font-size:14.9px;font-weight:bold;">EngineV2</div>
<div style="left:1499.6px;top:552.3px;width:1px;height:19.7px;background:#ebebeb;"></div>
<div style="left:1366.4px;top:590.9px;width:365.6px;height:1px;background:#efefef;"></div>
<div style="left:1368px;top:572px;width:131.4px;height:19px;overflow:hidden;"><div style="left:3.2px;top:-10px;font-size:14.5px;">Number of Pass</div></div>
<div style="left:1502.7px;top:562px;font-size:14.5px;">Single Pass</div>
<div style="left:1499.6px;top:572px;width:1px;height:19.7px;background:#ebebeb;"></div>
<div style="left:1366.4px;top:610.6px;width:365.6px;height:1px;background:#efefef;"></div>
<div style="left:1368px;top:592px;width:131.4px;height:19px;overflow:hidden;"><div style="left:3.2px;top:-10px;font-size:14.5px;">Referenced Assemblies</div></div>
<div style="left:1502.7px;top:582px;font-size:14.9px;font-weight:bold;">(Referenced Assemblies)</div>
<div style="left:1499.6px;top:591.7px;width:1px;height:19.7px;background:#ebebeb;"></div>
<div style="left:1366.4px;top:630.3px;width:365.6px;height:1px;background:#efefef;"></div>
<div style="left:1368px;top:611px;width:131.4px;height:19px;overflow:hidden;"><div style="left:3.2px;top:-10px;font-size:14.5px;">Report Cache Mode</div></div>
<div style="left:1502.7px;top:601px;font-size:14.5px;">Off</div>
<div style="left:1499.6px;top:611.4px;width:1px;height:19.7px;background:#ebebeb;"></div>
<div style="left:1366.4px;top:650px;width:365.6px;height:1px;background:#efefef;"></div>
<div style="left:1368px;top:631px;width:131.4px;height:19px;overflow:hidden;"><div style="left:3.2px;top:-10px;font-size:14.5px;">Report Unit</div></div>
<div style="left:1502.7px;top:621px;font-size:14.9px;font-weight:bold;">Inches</div>
<div style="left:1499.6px;top:631.1px;width:1px;height:19.7px;background:#ebebeb;"></div>
<div style="left:1366.4px;top:669.7px;width:365.6px;height:1px;background:#efefef;"></div>
<div style="left:1368px;top:651px;width:131.4px;height:19px;overflow:hidden;"><div style="left:3.2px;top:-10px;font-size:14.5px;">Script Language</div></div>
<div style="left:1502.7px;top:641px;font-size:14.9px;font-weight:bold;">CSharp</div>
<div style="left:1499.6px;top:650.8px;width:1px;height:19.7px;background:#ebebeb;"></div>
<div style="left:1366.4px;top:689.4px;width:365.6px;height:1px;background:#efefef;"></div>
<div style="left:1368px;top:671px;width:131.4px;height:19px;overflow:hidden;"><div style="left:3.2px;top:-10px;font-size:14.5px;">Stop Before Page</div></div>
<div style="left:1502.7px;top:661px;font-size:14.5px;">0</div>
<div style="left:1499.6px;top:670.5px;width:1px;height:19.7px;background:#ebebeb;"></div>
<div style="left:1366.4px;top:709.1px;width:365.6px;height:1px;background:#efefef;"></div>
<div style="left:1368px;top:690px;width:131.4px;height:19px;overflow:hidden;"><div style="left:3.2px;top:-10px;font-size:14.5px;">Styles</div></div>
<div style="left:1502.7px;top:680px;font-size:14.5px;">(Styles)</div>
<div style="left:1499.6px;top:690.2px;width:1px;height:19.7px;background:#ebebeb;"></div>
<div style="left:1353px;top:709.9px;width:379px;height:19.7px;background:#f0f0f0;"></div>
<div style="left:1371.2px;top:700px;font-size:15.2px;font-weight:bold;">5. View</div>
<svg style="left:1355px;top:714.9px;" width="10" height="10" viewBox="0 0 10 10"><path d="M2 3.2l2.6 2.6l2.6-2.6" fill="none" stroke="#333" stroke-width="1.1"/></svg>
<div style="left:1366.4px;top:748.5px;width:365.6px;height:1px;background:#efefef;"></div>
<div style="left:1368px;top:730px;width:131.4px;height:19px;overflow:hidden;"><div style="left:3.2px;top:-10px;font-size:14.5px;">Preview Mode</div></div>
<div style="left:1502.7px;top:720px;font-size:14.5px;">Standard</div>
<div style="left:1499.6px;top:729.6px;width:1px;height:19.7px;background:#ebebeb;"></div>
<div style="left:1366.4px;top:768.2px;width:365.6px;height:1px;background:#efefef;"></div>
<div style="left:1366.6px;top:750.1px;width:133.4px;height:18.8px;background:#0078d7;"></div>
<div style="left:1368px;top:749px;width:131.4px;height:19px;overflow:hidden;"><div style="left:3.2px;top:-10px;font-size:14.5px;color:#fff;">Preview Settings</div></div>
<div style="left:1502.7px;top:739px;font-size:14.5px;">(Preview Settings)</div>
<div style="left:1499.6px;top:749.3px;width:1px;height:19.7px;background:#ebebeb;"></div>
<div style="left:1366.4px;top:787.9px;width:365.6px;height:1px;background:#efefef;"></div>
<div style="left:1368px;top:769px;width:131.4px;height:19px;overflow:hidden;"><div style="left:3.2px;top:-10px;font-size:14.5px;">Printer Settings</div></div>
<div style="left:1502.7px;top:759px;font-size:14.9px;font-weight:bold;">(Printer Settings)</div>
<div style="left:1499.6px;top:769px;width:1px;height:19.7px;background:#ebebeb;"></div>
<div style="left:1366.4px;top:807.6px;width:365.6px;height:1px;background:#efefef;"></div>
<div style="left:1368px;top:789px;width:131.4px;height:19px;overflow:hidden;"><div style="left:3.2px;top:-10px;font-size:14.5px;">Refresh Time</div></div>
<div style="left:1502.7px;top:779px;font-size:14.5px;">0</div>
<div style="left:1499.6px;top:788.7px;width:1px;height:19.7px;background:#ebebeb;"></div>
<div style="left:1366.4px;top:827.3px;width:365.6px;height:1px;background:#efefef;"></div>
<div style="left:1368px;top:808px;width:131.4px;height:19px;overflow:hidden;"><div style="left:3.2px;top:-10px;font-size:14.5px;">Parameters Orientation</div></div>
<div style="left:1502.7px;top:798px;font-size:14.5px;">Horizontal</div>
<div style="left:1499.6px;top:808.4px;width:1px;height:19.7px;background:#ebebeb;"></div>
<div style="left:1366.4px;top:847px;width:365.6px;height:1px;background:#efefef;"></div>
<div style="left:1368px;top:828px;width:131.4px;height:19px;overflow:hidden;"><div style="left:3.2px;top:-10px;font-size:14.5px;">Request Parameters</div></div>
<div style="left:1502.7px;top:818px;font-size:14.5px;">False</div>
<div style="left:1499.6px;top:828.1px;width:1px;height:19.7px;background:#ebebeb;"></div>
<svg style="left:1355px;top:773.5px;" width="10" height="11" viewBox="0 0 10 11"><path d="M3 1.8l3 3.4l-3 3.4" fill="none" stroke="#777" stroke-width="1.1"/></svg>
<div style="left:1704px;top:748.6px;width:28.6px;height:21.4px;background:#fff;"></div>
<div style="left:1709.9px;top:750.8px;width:21.5px;height:17.3px;background:#f0f0f0;border:1px solid #b4b4b4;"></div>
<div style="left:1717.2px;top:739px;font-size:9px;letter-spacing:-0.76px;font-weight:bold;color:#222;">...</div>
<div style="left:1733.2px;top:297.3px;width:21.8px;height:567.4px;background:#f0f0f0;"></div>
<div style="left:1733px;top:412px;width:21px;height:429.7px;background:#cdcdcd;"></div>
<svg style="left:1732.5px;top:300px;" width="23" height="562" viewBox="0 0 23 562"><path d="M7.2 11.4l4.2-4.2l4.2 4.2M7.2 551.6l4.2 4.2l4.2-4.2" fill="none" stroke="#444" stroke-width="1.5"/></svg>
<svg style="left:1695px;top:734px;" width="52" height="52" viewBox="0 0 52 52"><circle cx="26.1" cy="25" r="18.5" fill="none" stroke="#ff0000" stroke-width="5"/></svg>
<div style="left:1352.2px;top:868.5px;width:403.4px;height:56.4px;background:#fff;border:1px solid #b0b0b0;"></div>
<div style="left:1357.7px;top:859px;font-size:14.8px;font-weight:bold;">Preview Settings</div>
<div style="left:1357.7px;top:877px;font-size:14.5px;letter-spacing:-0.04px;">Controls which will be shown in the Preview Window.</div>
<div style="left:1353px;top:950px;width:103.5px;height:1.8px;background:#2b579a;"></div>
<div style="left:1456.5px;top:928px;width:1px;height:22px;background:#e2e2e2;"></div>
<div style="left:1383.7px;top:920px;font-size:14.5px;letter-spacing:-0.07px;color:#24509a;">Properties</div>
<div style="left:1488.2px;top:920px;font-size:14.5px;letter-spacing:-0.02px;">Dictionary</div>
<div style="left:1591.5px;top:920px;font-size:14.5px;letter-spacing:-0.04px;">Report Tree</div>
<svg style="left:1353px;top:926px;" width="240" height="28" viewBox="0 0 240 28"><g transform="translate(-1353 -926)"><rect x="1355.6" y="938.8" width="16.8" height="10.6" fill="#fff" stroke="#a3a3a3" stroke-width="1"/><path d="M1358 942.4h5M1365 942.4h5M1358 944.8h5M1365 944.8h5M1358 947.2h5M1365 947.2h5" stroke="#bdd2ef" stroke-width="1.1"/><path d="M1372.6 932.2l4.2-1.6v8.2l-4.2-2.4z" fill="#3fae49"/><path d="M1359.4 940.2C1361 935.6 1363.6 931 1368 930.2C1371.6 929.6 1374 931.4 1374 934C1374 936.6 1371.4 938.4 1368.8 937.8C1367 937.4 1365.6 936.6 1364.2 937.6L1361 940.6z" fill="#f2cb5e" stroke="#d2aa42" stroke-width="0.6"/><rect x="1473.6" y="936" width="4.9" height="7" fill="#fff" stroke="#a8a8a8" stroke-width="0.9"/><rect x="1468.6" y="931.8" width="9.9" height="4.2" fill="#3f75b8"/><rect x="1463.4" y="939" width="9" height="7.4" fill="#fff" stroke="#a8a8a8" stroke-width="0.9"/><rect x="1462.9" y="935.8" width="10" height="3.4" fill="#3f75b8"/><path d="M1465.4 941.4h1.6M1469 941.4h1.6M1465.4 944h1.6M1469 944h1.6M1475.6 938.4h1M1475.6 940.8h1" stroke="#9ebce6" stroke-width="1.2"/><rect x="1565" y="930.9" width="18.2" height="17.6" fill="#fff" stroke="#9a9a9a" stroke-width="1.1"/><path d="M1570.9 935v9.4h4.6M1570.9 938.2h4.6" fill="none" stroke="#7fa6dc" stroke-width="0.9"/><path d="M1568.8 934.3h4.9M1575.9 938.2h3.5M1575.9 944.3h3.5" stroke="#3f75b8" stroke-width="1.9"/></g></svg>
<!-- p_status -->
<div style="left:0px;top:960.5px;width:1760px;height:39.5px;background:#2b579a;"></div>
<div style="left:0px;top:960.5px;width:1760px;height:1.5px;background:#1b4590;"></div>
<div style="left:0px;top:962px;width:1.1px;height:38px;background:#3d66a7;"></div>
<div style="left:0px;top:998.9px;width:1760px;height:1.1px;background:#3a63a5;"></div>
<div style="left:77.3px;top:964px;width:1px;height:31px;background:#8aa3cf;"></div>
<div style="left:239px;top:964px;width:1px;height:31px;background:#8aa3cf;"></div>
<div style="left:306px;top:964px;width:1px;height:31px;background:#8aa3cf;"></div>
<div style="left:1291.3px;top:962px;width:1px;height:36.6px;background:#8aa3cf;"></div>
<div style="left:12.5px;top:962px;font-size:16.8px;letter-spacing:-0.8px;color:#fff;">Inches</div>
<div style="left:114.5px;top:962px;font-size:16.8px;letter-spacing:-0.61px;color:#fff;">Check for Issues</div>
<div style="left:249px;top:962px;font-size:16.8px;letter-spacing:-0.72px;color:#fff;">Report</div>
<div style="left:312px;top:961px;font-size:16.2px;letter-spacing:-0.68px;color:#fff;">X:4.03 Y:5.97</div>
<div style="left:1516.2px;top:962px;font-size:16.8px;letter-spacing:-1.2px;color:#fff;">50%</div>
<svg style="left:0px;top:961px;" width="1760" height="39" viewBox="0 0 1760 39"><path d="M67 24.5h8l-4-6.7z M91.2 12.8v14.2l8.8-7.1z" fill="#fff"/><g fill="none" stroke="#c8d4ea" stroke-width="1.2"><rect x="1308.6" y="8.6" width="21.6" height="20.6"/><rect x="1357.6" y="8.6" width="21.6" height="20.6"/><rect x="1406.4" y="8.6" width="21.6" height="20.6"/><rect x="1455.2" y="8.6" width="21.6" height="20.6"/></g><g fill="#fff"><path d="M1311 19l3.6-3.4v6.8z M1328 19l-3.6-3.4v6.8z"/><g fill="#b7c5e2"><rect x="1315.4" y="14.6" width="8" height="1.6"/><rect x="1315.4" y="18.2" width="8" height="1.6"/><rect x="1315.4" y="21.8" width="8" height="1.6"/></g><path d="M1368.4 11l3.4 3.6h-6.8z M1368.4 27l3.4-3.6h-6.8z"/><g fill="#c3cfe8"><rect x="1361.4" y="16.8" width="14" height="1.2"/><rect x="1361.4" y="20" width="14" height="1.2"/></g></g><g fill="none" stroke="#dfe6f4" stroke-width="1.1"><rect x="1412.2" y="12" width="10" height="14"/><path d="M1414.6 16h5.2M1414.6 19h5.2M1414.6 22h5.2"/></g><rect x="1579" y="18.4" width="12" height="2.4" fill="#fff"/><rect x="1596" y="19" width="130" height="1" fill="#5d80bc"/><rect x="1661.3" y="15.5" width="1" height="8" fill="#5d80bc"/><path d="M1623 9.8h11.6v11l-5.8 5.4l-5.8-5.4z" fill="#fff"/><rect x="1732.8" y="18.4" width="11" height="2.4" fill="#fff"/><rect x="1737.1" y="14" width="2.4" height="11" fill="#fff"/></svg>
<div style="left:1458.25px;top:960px;font-size:9.4px;font-weight:bold;color:#f2f5fb;transform:scaleX(.66);">100</div>
</body></html>
